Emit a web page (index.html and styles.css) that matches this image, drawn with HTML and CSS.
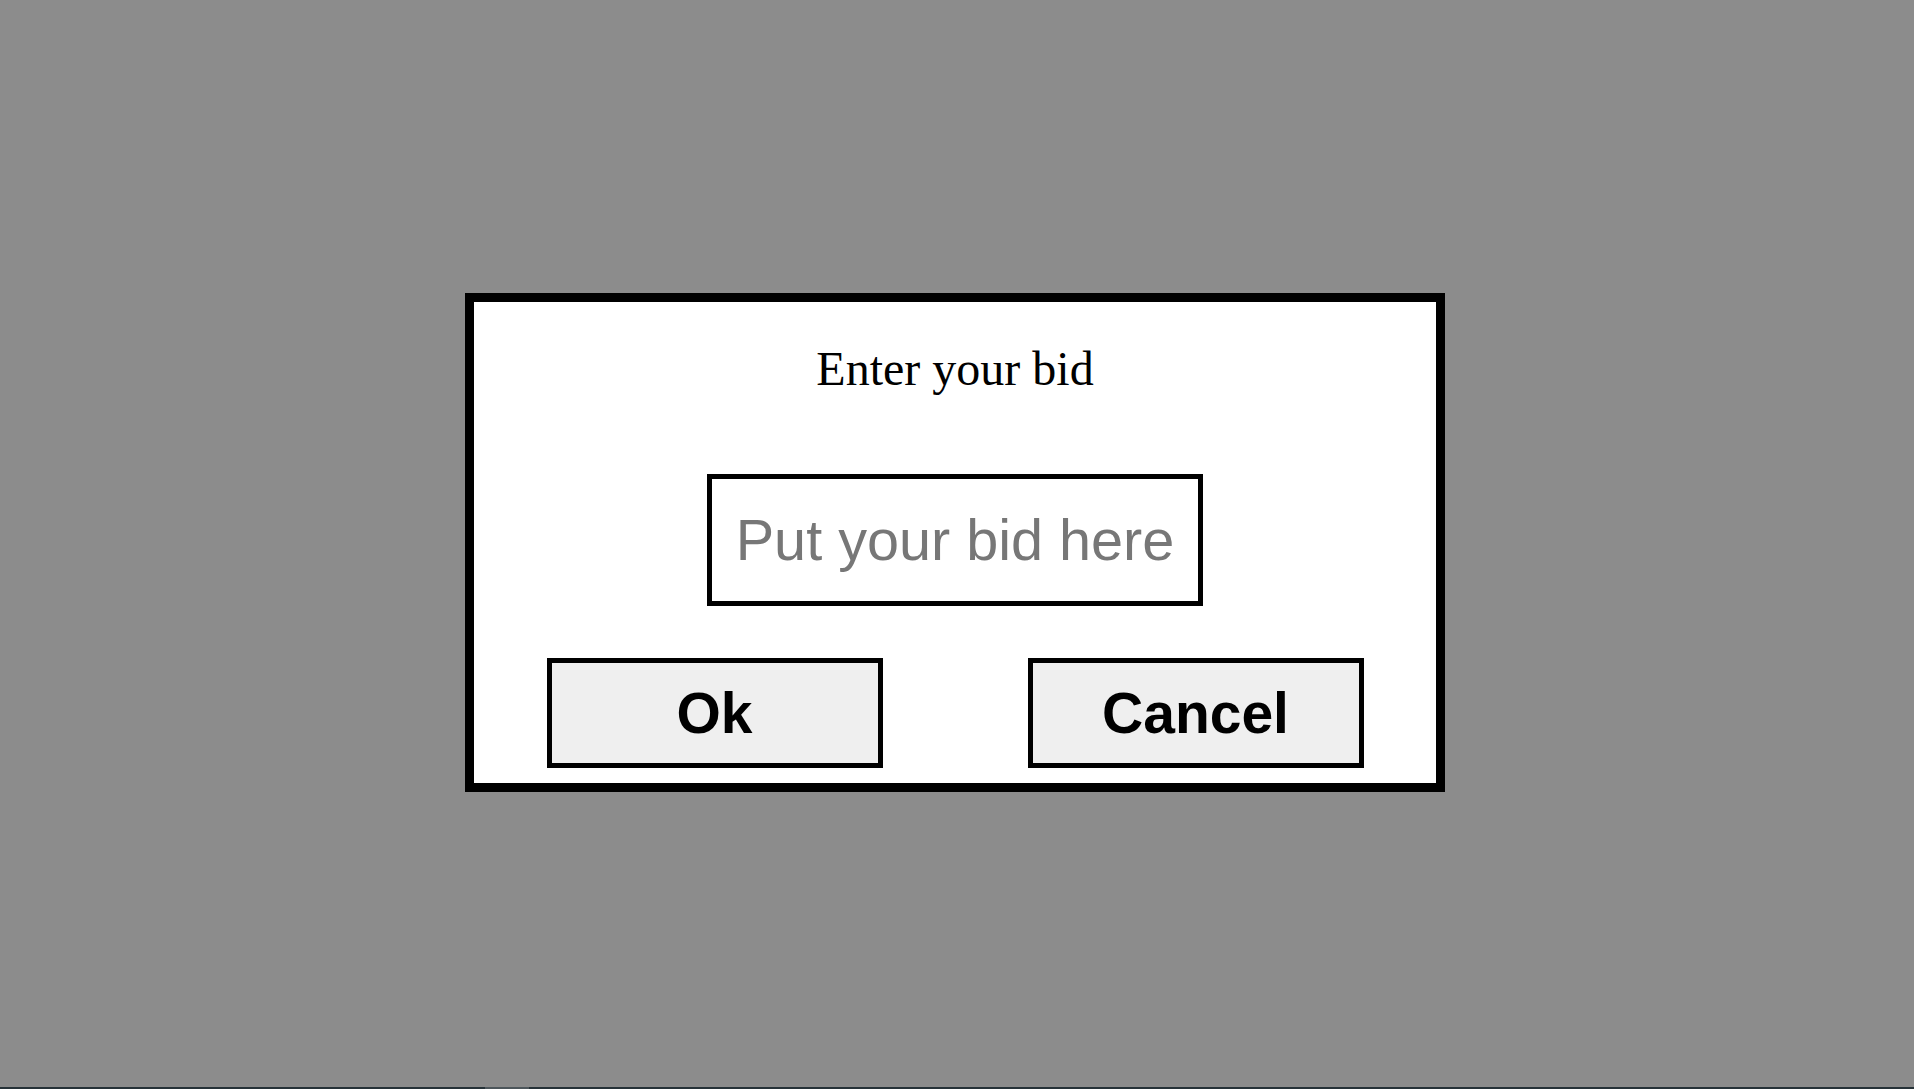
FILE: index.html
```html
<!DOCTYPE html>
<html lang="en">
<head>
<meta charset="utf-8">
<title>Enter your bid</title>
<link rel="stylesheet" href="styles.css">
</head>
<body>
<div class="screen">
  <div class="dialog">
    <div class="title">Enter your bid</div>
    <input class="bid-input" type="text" placeholder="Put your bid here">
    <div class="actions">
      <button class="btn">Ok</button>
      <button class="btn">Cancel</button>
    </div>
  </div>
</div>
<div class="taskbar"><span class="taskbar-item"></span></div>
</body>
</html>
```

FILE: styles.css
```css
html, body {
  margin: 0;
  padding: 0;
  height: 100%;
}

body {
  background: #8c8c8c;
  font-family: "Liberation Serif", "Times New Roman", serif;
}

.screen {
  box-sizing: border-box;
  height: 100vh;
  padding: 0 4px 4px 0;
  display: flex;
  align-items: center;
  justify-content: center;
}

.dialog {
  box-sizing: border-box;
  width: 980px;
  height: 499px;
  border: 9px solid #000;
  background: #fff;
  display: flex;
  flex-direction: column;
  align-items: center;
}

.title {
  margin-top: 39px;
  font-size: 48px;
  line-height: 55px;
  color: #000;
}

.bid-input {
  box-sizing: border-box;
  margin-top: 78px;
  width: 496px;
  height: 132px;
  border: 5px solid #000;
  padding: 0 6px;
  background: #fff;
  font-family: "Liberation Sans", Arial, sans-serif;
  font-size: 57.6px;
  text-align: center;
  outline: none;
}

.bid-input::placeholder {
  color: #777;
}

.actions {
  margin-top: 52px;
  width: 100%;
  display: flex;
  justify-content: space-around;
}

.btn {
  box-sizing: border-box;
  width: 336px;
  height: 110px;
  border: 5px solid #000;
  background: #efefef;
  font-family: "Liberation Sans", Arial, sans-serif;
  font-weight: bold;
  font-size: 57px;
  color: #000;
  padding: 0;
}

.taskbar {
  position: fixed;
  left: 0;
  right: 0;
  bottom: 0;
  height: 2px;
  background: #263238;
}

.taskbar-item {
  position: absolute;
  left: 485px;
  top: 0;
  width: 44px;
  height: 2px;
  background: #4d565b;
}
```
